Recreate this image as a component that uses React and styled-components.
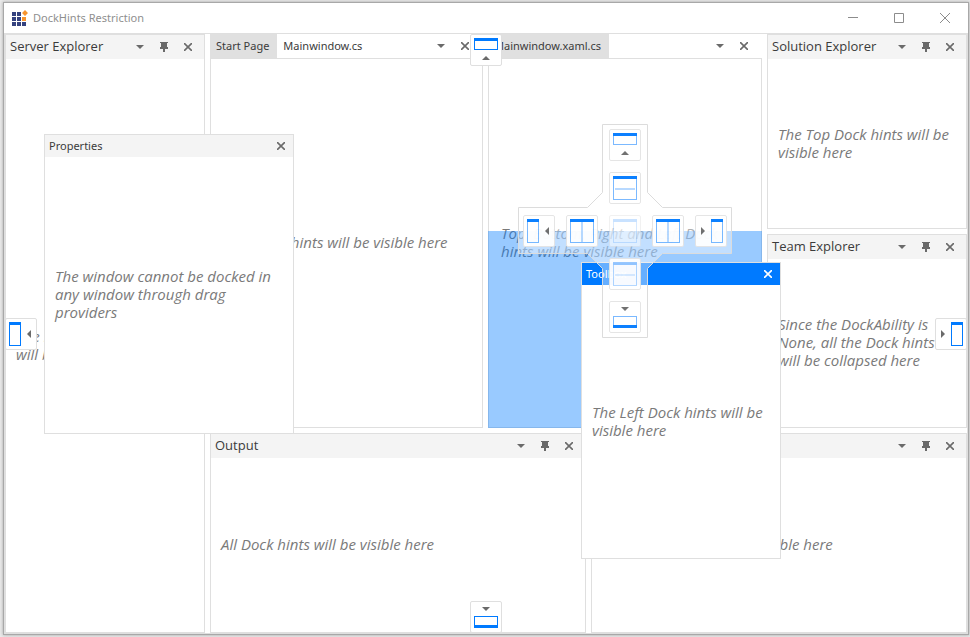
import React from "react";
import styled, { createGlobalStyle, css } from "styled-components";

const c = {
  line: "#dfdfdf",
  header: "#f4f4f4",
  tab: "#e0e0e0",
  glyph: "#6a6a6a",
  accent: "#007aff",
  body: "#7a7a7a",
  title: "#3b3b3b",
};

const GlobalStyle = createGlobalStyle`
  *, *::before, *::after { box-sizing: border-box; }
  body {
    margin: 0;
    background: #e9e9e9;
    font-family: "Noto Sans", "Open Sans", sans-serif;
    font-size: 11px;
    color: ${c.title};
  }
  button { font: inherit; padding: 0; margin: 0; border: 0; background: none; color: inherit; }
`;

const Desktop = styled.div`
  display: flex;
  min-height: 100vh;
  padding: 2px 1px 2px 3px;
`;

const AppWindow = styled.div`
  flex: 1;
  min-width: 0;
  display: flex;
  flex-direction: column;
  background: #fff;
  border: 1px solid #a8a8a8;
  box-shadow: 0 0 3px rgba(0, 0, 0, 0.3);
`;

const TitleBar = styled.header`
  display: flex;
  align-items: center;
  height: 30px;
  padding-left: 8px;
`;

const AppTitle = styled.h1`
  flex: 1;
  margin: 0;
  padding-left: 5px;
  font-size: 11px;
  line-height: 18px;
  font-weight: 400;
  color: #8f8f8f;
`;

const CaptionButton = styled.button`
  display: grid;
  place-items: center;
  width: 46px;
  height: 30px;
  color: #8c8c8c;
`;

const Workspace = styled.main`
  position: relative;
  flex: 1;
  display: grid;
  grid-template-columns: minmax(0, 200fr) minmax(0, 757fr);
  gap: 5px;
  border: 1px solid ${c.line};
`;

const MainArea = styled.div`
  display: grid;
  grid-template-rows: minmax(0, 394fr) minmax(0, 200fr);
  gap: 5px;
`;

const UpperRow = styled.div`
  display: grid;
  grid-template-columns: minmax(0, 552fr) minmax(0, 200fr);
  gap: 5px;
`;

const Documents = styled.div`
  display: grid;
  grid-template-columns: minmax(0, 273fr) minmax(0, 274fr);
  gap: 5px;
`;

const SideStack = styled.div`
  display: grid;
  grid-template-rows: minmax(0, 195fr) minmax(0, 194fr);
  gap: 5px;
`;

const LowerRow = styled.div`
  display: grid;
  grid-template-columns: minmax(0, 1fr) minmax(0, 1fr);
  gap: 5px;
`;

const Panel = styled.section`
  display: flex;
  flex-direction: column;
  background: #fff;
  border: 1px solid ${c.line};
`;

const PanelHeader = styled.header`
  display: flex;
  align-items: center;
  height: 24px;
  padding: 0 4px;
  background: ${c.header};
`;

const PanelTitle = styled.h2`
  flex: 1;
  margin: 0;
  padding-bottom: 2px;
  font-family: "Open Sans", "Noto Sans", sans-serif;
  font-size: 13px;
  line-height: 18px;
  font-weight: 400;
  white-space: nowrap;
`;

const ToolButton = styled.button`
  display: grid;
  place-items: center;
  width: 24px;
  height: 20px;
  color: ${(p) => (p.$light ? "#fff" : c.glyph)};
`;

const Content = styled.div`
  flex: 1;
  display: flex;
  align-items: center;
  padding: 0 10px;
`;

const Message = styled.p`
  margin: 0;
  padding-bottom: 2px;
  font-family: "Open Sans", "Noto Sans", sans-serif;
  font-size: 15px;
  line-height: 18px;
  font-style: italic;
  color: ${c.body};
  white-space: pre;
`;

const DocumentPane = styled.section`
  position: relative;
  display: flex;
  flex-direction: column;
`;

const TabStrip = styled.div`
  display: flex;
  align-items: center;
  height: 24px;
  padding-right: 6px;
`;

const Tab = styled.button`
  height: 24px;
  padding: 0 8px 0 6px;
  line-height: 18px;
  white-space: nowrap;
  background: ${(p) => (p.$filled ? c.tab : "transparent")};
`;

const Spacer = styled.span`
  flex: 1;
`;

const DocumentBody = styled.div`
  flex: 1;
  display: flex;
  align-items: center;
  padding: 0 12px;
  border: 1px solid ${c.line};
`;

const DropPreview = styled.div`
  position: absolute;
  z-index: 1;
  inset: 50% 0 0;
  background: rgba(0, 122, 255, 0.4);
`;

const FloatingWindow = styled.section`
  position: absolute;
  z-index: 2;
  display: flex;
  flex-direction: column;
  background: #fff;
  border: 1px solid ${c.line};
  left: ${(p) => p.$x}px;
  top: ${(p) => p.$y}px;
  width: ${(p) => p.$w}px;
  height: ${(p) => p.$h}px;
`;

const FloatingHeader = styled.header`
  display: flex;
  align-items: center;
  height: 22px;
  padding-left: 4px;
  color: ${(p) => (p.$active ? "#fff" : c.title)};
  background: ${(p) => (p.$active ? c.accent : c.header)};
`;

const FloatingTitle = styled.h2`
  flex: 1;
  margin: 0;
  font-size: 11px;
  line-height: 18px;
  font-weight: 400;
`;

const edges = {
  top: css`top: 0; left: 50%; transform: translateX(-50%);`,
  bottom: css`bottom: 0; left: 50%; transform: translateX(-50%);`,
  left: css`left: 0; top: 50%; transform: translateY(-50%);`,
  right: css`right: 0; top: 50%; transform: translateY(-50%);`,
};

const EdgeHint = styled.button`
  position: absolute;
  z-index: 4;
  display: grid;
  place-items: center;
  width: 32px;
  height: 32px;
  background: #fff;
  border: 1px solid ${c.line};
  border-radius: 2px;
  ${(p) => edges[p.$edge]}
`;

const Compass = styled.div`
  position: absolute;
  z-index: 3;
  top: 50%;
  left: 50%;
  transform: translate(-50%, -50%);
  display: grid;
  grid-template-columns: repeat(5, 32px);
  grid-template-rows: repeat(5, 32px);
  gap: 11px;
  padding: 5px;
`;

const CompassShape = styled.svg`
  position: absolute;
  top: 0;
  left: 0;
`;

const CompassButton = styled.button`
  position: relative;
  display: grid;
  place-items: center;
  grid-row: ${(p) => p.$row};
  grid-column: ${(p) => p.$col};
  background: #fff;
  border: 1px solid #e4e4e4;
  border-radius: 2px;
  opacity: ${(p) => p.$opacity || 0.95};
`;

const icon = { fill: "none", "aria-hidden": true };

const Logo = () => (
  <svg width="16" height="16" viewBox="0 0 16 16" {...icon}>
    <path fill="#34427f" d="M0 2h4v4H0zM5 2h4v4H5zM0 7h4v4H0zM5 7h4v4H5zM0 12h4v4H0zM5 12h4v4H5zM10 12h4v4h-4z" />
    <path fill="#f7942d" d="M10 7h4v4h-4zM13 0l3 3-3 3-3-3z" />
  </svg>
);
const Minimize = () => (
  <svg width="10" height="10" {...icon}><path stroke="currentColor" d="M0 4.5h10" /></svg>
);
const Maximize = () => (
  <svg width="10" height="10" {...icon}><path stroke="currentColor" d="M.5.5h9v9h-9z" /></svg>
);
const CloseWindow = () => (
  <svg width="10" height="10" {...icon}><path stroke="currentColor" d="M0 0l10 10M10 0L0 10" /></svg>
);
const Cross = () => (
  <svg width="8" height="8" {...icon}><path stroke="currentColor" strokeWidth="1.6" d="M0 0l8 8M8 0L0 8" /></svg>
);
const Caret = () => (
  <svg width="8" height="4" {...icon}><path fill="currentColor" d="M0 0h8L4 4z" /></svg>
);
const Pin = () => (
  <svg width="10" height="10" {...icon}>
    <path fill="currentColor" d="M1 0h8v1H8v4h1v2H6v3H4V7H1V5h1V1H1z" />
  </svg>
);

const arrows = {
  top: "M11 25l4-4 4 4z",
  bottom: "M11 5h8l-4 4z",
  left: "M21 15l4-4v8z",
  right: "M9 15l-4-4v8z",
};

const frames = {
  top: [3, 3, 24, 12],
  bottom: [3, 14, 24, 12],
  left: [3, 3, 12, 24],
  right: [15, 3, 12, 24],
};

const tones = {
  solid: { frame: "#007aff", bar: "#007aff" },
  soft: { frame: "#74b6ff", bar: "#007aff", divider: "#b5d8ff" },
  faint: { frame: "#b0d5ff", bar: "#94c6ff", divider: "#d9ebff" },
};

function DockGlyph({ kind, tone = "solid" }) {
  const t = tones[tone];
  const [x, y, w, h] = frames[kind] || [3, 3, 24, 24];
  const barY = kind === "bottom" ? y + h - 3 : y;
  return (
    <svg width="30" height="30" viewBox="0 0 30 30" {...icon}>
      <rect x={x + 0.5} y={y + 0.5} width={w - 1} height={h - 1} stroke={t.frame} />
      <path fill={t.bar} d={`M${x} ${barY}h${w}v3h-${w}z`} />
      {kind === "rows" && <path stroke={t.divider} strokeWidth="2" d="M5 16h20" />}
      {kind === "columns" && <path stroke={t.divider} strokeWidth="2" d="M15 6v20" />}
      {arrows[kind] && <path fill={c.glyph} d={arrows[kind]} />}
    </svg>
  );
}

function PanelActions() {
  return (
    <>
      <ToolButton aria-label="Window options"><Caret /></ToolButton>
      <ToolButton aria-label="Auto hide"><Pin /></ToolButton>
      <ToolButton aria-label="Close"><Cross /></ToolButton>
    </>
  );
}

function DockPanel({ title, label, children }) {
  return (
    <Panel aria-label={label || title}>
      <PanelHeader>
        {title ? <PanelTitle>{title}</PanelTitle> : <Spacer />}
        <PanelActions />
      </PanelHeader>
      <Content><Message>{children}</Message></Content>
    </Panel>
  );
}

function DocumentGroup({ tabs, message, children }) {
  return (
    <DocumentPane>
      <TabStrip role="tablist">
        {tabs.map((t) => (
          <Tab key={t.label} role="tab" aria-selected={!t.filled} $filled={t.filled}>{t.label}</Tab>
        ))}
        <Spacer />
        <ToolButton aria-label="Open documents"><Caret /></ToolButton>
        <ToolButton aria-label="Close document"><Cross /></ToolButton>
      </TabStrip>
      <DocumentBody><Message>{message}</Message></DocumentBody>
      {children}
    </DocumentPane>
  );
}

function Floating({ title, active, message, ...box }) {
  return (
    <FloatingWindow {...box}>
      <FloatingHeader $active={active}>
        <FloatingTitle>{title}</FloatingTitle>
        <ToolButton $light={active} aria-label={`Close ${title}`}><Cross /></ToolButton>
      </FloatingHeader>
      <Content><Message>{message}</Message></Content>
    </FloatingWindow>
  );
}

const hints = [
  { kind: "top", row: 1, col: 3, label: "Dock to top edge" },
  { kind: "rows", row: 2, col: 3, label: "Split above" },
  { kind: "left", row: 3, col: 1, label: "Dock to left edge" },
  { kind: "columns", row: 3, col: 2, label: "Split left" },
  { kind: "center", row: 3, col: 3, label: "Add as tab", opacity: 0.5, tone: "faint" },
  { kind: "columns", row: 3, col: 4, label: "Split right" },
  { kind: "right", row: 3, col: 5, label: "Dock to right edge" },
  { kind: "rows", row: 4, col: 3, label: "Split below", tone: "faint" },
  { kind: "bottom", row: 5, col: 3, label: "Dock to bottom edge" },
];

function DockCompass() {
  return (
    <Compass>
      <CompassShape width="214" height="214" viewBox="0 0 214 214" aria-hidden="true">
        <path
          fill="#fff"
          fillOpacity="0.4"
          stroke="#dcdcdc"
          d="M84.500.5h45v68l15 15h69v46h-69l-15 15v69h-45v-69l-15-15h-69v-46h69l15-15z"
        />
      </CompassShape>
      {hints.map((h) => (
        <CompassButton key={h.label} aria-label={h.label} $row={h.row} $col={h.col} $opacity={h.opacity}>
          <DockGlyph kind={h.kind} tone={h.tone || "soft"} />
        </CompassButton>
      ))}
    </Compass>
  );
}

export default function App() {
  return (
    <Desktop>
      <GlobalStyle />
      <AppWindow>
        <TitleBar>
          <Logo />
          <AppTitle>DockHints Restriction</AppTitle>
          <CaptionButton aria-label="Minimize"><Minimize /></CaptionButton>
          <CaptionButton aria-label="Maximize"><Maximize /></CaptionButton>
          <CaptionButton aria-label="Close window"><CloseWindow /></CaptionButton>
        </TitleBar>
        <Workspace>
          <DockPanel title="Server Explorer">{"The Right Dock hints\nwill be visible here"}</DockPanel>
          <MainArea>
            <UpperRow>
              <Documents>
                <DocumentGroup
                  tabs={[{ label: "Start Page", filled: true }, { label: "Mainwindow.cs" }]}
                  message="Side Dock hints will be visible here"
                />
                <DocumentGroup
                  tabs={[{ label: "Mainwindow.xaml.cs", filled: true }]}
                  message={"Top, Bottom, Right and Left Dock\nhints will be visible here"}
                >
                  <DropPreview />
                  <DockCompass />
                </DocumentGroup>
              </Documents>
              <SideStack>
                <DockPanel title="Solution Explorer">{"The Top Dock hints will be\nvisible here"}</DockPanel>
                <DockPanel title="Team Explorer">
                  {"Since the DockAbility is\nNone, all the Dock hints\nwill be collapsed here"}
                </DockPanel>
              </SideStack>
            </UpperRow>
            <LowerRow>
              <DockPanel title="Output">All Dock hints will be visible here</DockPanel>
              <DockPanel label="Error List">Right Dock hints will be visible here</DockPanel>
            </LowerRow>
          </MainArea>
          <Floating
            title="Properties"
            message={"The window cannot be docked in\nany window through drag\nproviders"}
            $x={39} $y={100} $w={250} $h={300}
          />
          <Floating
            title="Toolbox"
            active
            message={"The Left Dock hints will be\nvisible here"}
            $x={576} $y={228} $w={200} $h={297}
          />
          <EdgeHint $edge="top" aria-label="Dock window top"><DockGlyph kind="top" /></EdgeHint>
          <EdgeHint $edge="bottom" aria-label="Dock window bottom"><DockGlyph kind="bottom" /></EdgeHint>
          <EdgeHint $edge="left" aria-label="Dock window left"><DockGlyph kind="left" /></EdgeHint>
          <EdgeHint $edge="right" aria-label="Dock window right"><DockGlyph kind="right" /></EdgeHint>
        </Workspace>
      </AppWindow>
    </Desktop>
  );
}
